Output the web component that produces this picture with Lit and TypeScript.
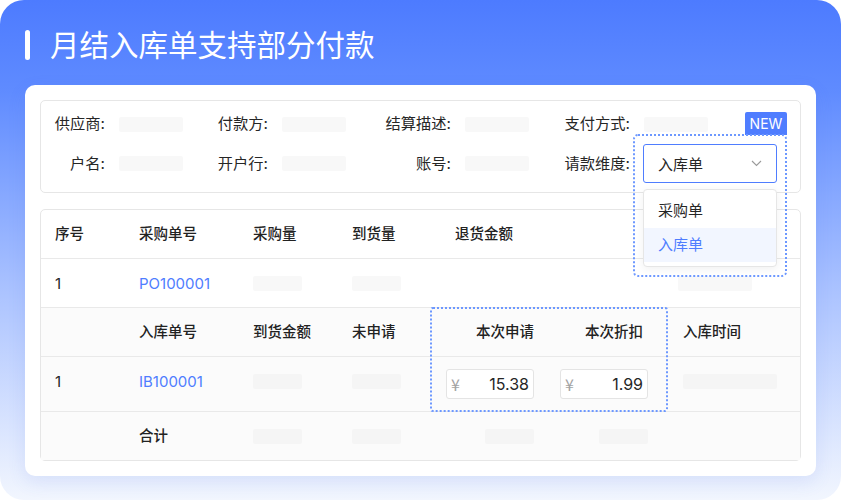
import { LitElement, html, css } from "lit";
import { customElement } from "lit/decorators.js";

const ph = (cls = "") => html`<span class="ph ${cls}"></span>`;

@customElement("app-root")
export class AppRoot extends LitElement {
  static styles = css`
    :host {
      display: block;
      width: 841px;
      height: 500px;
      background: #fff;
      font-family: Inter, "Noto Sans CJK SC", "Noto Sans", sans-serif;
      color: #262626;
    }
    * { box-sizing: border-box; }
    .frame {
      width: 841px;
      height: 500px;
      border-radius: 24px;
      background: linear-gradient(180deg, #4d7bff 0%, #5f8bff 18%, #aec5ff 60%, #f2f6fe 100%);
      padding: 30px 25px 25px;
      display: flex;
      flex-direction: column;
    }
    .title {
      display: flex;
      align-items: center;
      gap: 20px;
      height: 30px;
      margin-bottom: 25px;
      color: #fff;
      font-size: 29.5px;
      line-height: 30px;
    }
    .title i {
      width: 5px;
      height: 30px;
      border-radius: 3px;
      background: #fff;
    }
    .card {
      flex: 1;
      background: #fff;
      border-radius: 10px;
      padding: 15px;
      display: flex;
      flex-direction: column;
      gap: 16px;
      box-shadow: 0 6px 18px rgba(70, 110, 220, 0.12);
    }
    .panel {
      border: 1.5px solid #e6e6e6;
      border-radius: 5px;
      position: relative;
    }
    .info {
      height: 93px;
      padding: 11px 0 0 14px;
      display: grid;
      grid-template-columns: 50px 85px 50px 91px 64px 85px 66px 1fr;
      grid-template-rows: 24px 39px;
      row-gap: 8px;
      column-gap: 14px;
      align-items: center;
      font-size: 15px;
    }
    .label {
      white-space: nowrap;
      text-align: right;
      line-height: 20px;
      font-size: 15.25px;
      justify-self: end;
    }
    .ph {
      display: block;
      width: 64px;
      height: 15px;
      border-radius: 2px;
      background: #f8f8f8;
    }
    .sm { width: 49px; }
    .wide { width: 94px; }
    .mid { width: 74px; }
    .dark { background: #f5f5f5; }
    .select-cell { position: relative; height: 39px; }
    .select {
      width: 134px;
      height: 39px;
      margin-left: -1px;
      border: 1.5px solid #4f7dff;
      border-radius: 3px;
      padding: 0 14px;
      display: flex;
      align-items: center;
      justify-content: space-between;
      background: #fff;
    }
    .select svg { width: 11px; height: 7px; }
    .new {
      position: absolute;
      left: 101px;
      top: -32px;
      width: 42px;
      height: 23px;
      background: #4f7dff;
      color: #fff;
      border-radius: 2px 2px 0 0;
      font-size: 14px;
      line-height: 23px;
      text-align: center;
    }
    .dots {
      position: absolute;
      border: 2px dotted #6d98ff;
      border-radius: 5px;
      pointer-events: none;
      z-index: 3;
    }
    .dots.a { left: -11px; top: -10px; width: 154px; height: 143px; }
    .dots.b { left: 389px; top: 97px; width: 238px; height: 105px; border-radius: 3px; }
    .menu {
      position: absolute;
      left: -1px;
      top: 45px;
      width: 134px;
      height: 78px;
      background: #fff;
      border: 1.5px solid #e6e6e6;
      border-radius: 4px;
      padding: 2px 0 4px;
      box-shadow: 0 2px 8px rgba(0, 0, 0, 0.06);
      z-index: 2;
    }
    .opt {
      height: 34px;
      line-height: 34px;
      padding: 0 14px;
    }
    .opt.first { height: 36px; line-height: 37px; }
    .opt.on { background: #f2f6ff; color: #4f7dff; }
    .table {
      flex: 1;
      display: flex;
      flex-direction: column;
      font-size: 15px;
    }
    .row {
      display: grid;
      align-items: center;
      height: 49px;
      padding-left: 14px;
      border-bottom: 1.5px solid #e9e9e9;
    }
    .row:last-child { border-bottom: 0; height: 48px; }
    .top { grid-template-columns: 84px 114px 99px 103px 223px 1fr; }
    .low {
      grid-template-columns: 84px 114px 99px 79px 103px 114px 1fr;
      background: #fbfbfb;
    }
    .tall { height: 55px; }
    .tall .up { margin-bottom: 5px; }
    .th {
      font-weight: 500;
      font-size: 14.5px;
      color: #222;
      padding-bottom: 3px;
    }
    .r { display: flex; justify-content: flex-end; }
    .pr { padding-right: 5px; }
    .last { padding-left: 35px; }
    .link { color: #4f7dff; font-size: 15px; }
    .num { font-size: 15px; }
    .input {
      width: 88px;
      height: 30px;
      border: 1.5px solid #e4e4e4;
      border-radius: 3px;
      background: #fff;
      display: flex;
      align-items: center;
      justify-content: space-between;
      padding: 0 4px;
      font-size: 16px;
    }
    .input span:first-child {
      color: #a3a3a3;
      font-family: "Noto Sans CJK SC", sans-serif;
    }
  `;

  render() {
    return html`
      <div class="frame">
        <div class="title"><i></i><span>月结入库单支持部分付款</span></div>
        <div class="card">
          <div class="panel info">
            <span class="label">供应商:</span>${ph()}
            <span class="label">付款方:</span>${ph()}
            <span class="label">结算描述:</span>${ph()}
            <span class="label">支付方式:</span>${ph()}
            <span class="label">户名:</span>${ph()}
            <span class="label">开户行:</span>${ph()}
            <span class="label">账号:</span>${ph()}
            <span class="label">请款维度:</span>
            <div class="select-cell">
              <div class="new">NEW</div>
              <div class="dots a"></div>
              <div class="select">
                <span>入库单</span>
                <svg viewBox="0 0 11 7" fill="none" stroke="#9a9a9a" stroke-width="1.1">
                  <path d="M1 1l4.5 4.5L10 1" />
                </svg>
              </div>
              <div class="menu">
                <div class="opt first">采购单</div>
                <div class="opt on">入库单</div>
              </div>
            </div>
          </div>
          <div class="panel table">
            <div class="dots b"></div>
            <div class="row top">
              <span class="th">序号</span><span class="th">采购单号</span><span class="th">采购量</span>
              <span class="th">到货量</span><span class="th">退货金额</span><span></span>
            </div>
            <div class="row top">
              <span class="num">1</span><span class="link">PO100001</span>${ph("sm")}${ph("sm")}<span></span>${ph("mid")}
            </div>
            <div class="row low">
              <span></span><span class="th">入库单号</span><span class="th">到货金额</span><span class="th">未申请</span>
              <span class="th r">本次申请</span><span class="th r pr">本次折扣</span><span class="th last">入库时间</span>
            </div>
            <div class="row low tall">
              <span class="num up">1</span><span class="link up">IB100001</span>${ph("sm dark up")}${ph("sm dark up")}
              <div class="r"><div class="input"><span>¥</span><span>15.38</span></div></div>
              <div class="r"><div class="input"><span>¥</span><span>1.99</span></div></div>
              <div class="last up">${ph("wide dark")}</div>
            </div>
            <div class="row low">
              <span></span><span class="th">合计</span>${ph("sm dark")}${ph("sm dark")}
              <div class="r">${ph("sm dark")}</div><div class="r">${ph("sm dark")}</div><span></span>
            </div>
          </div>
        </div>
      </div>
    `;
  }
}
